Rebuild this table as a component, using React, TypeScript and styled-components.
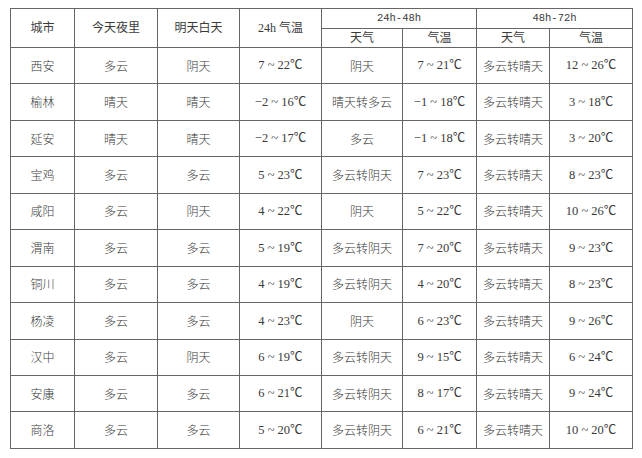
import styled, { createGlobalStyle } from "styled-components";

const GlobalStyle = createGlobalStyle`
  html, body {
    margin: 0;
    padding: 0;
    background: #fff;
  }
  body {
    font-family: "Noto Sans CJK SC", "Liberation Serif", serif;
    color: #333;
  }
`;

const Page = styled.div`
  padding: 8px 0 0 10px;
`;

const Table = styled.table`
  border-collapse: collapse;
  table-layout: fixed;
  width: 623px;
  font-size: 12px;
`;

const HeadCell = styled.th<{ $mono?: boolean }>`
  border: 1px solid #666;
  font-weight: normal;
  text-align: center;
  vertical-align: middle;
  height: 18.5px;
  padding: 0;
  line-height: 1;
  color: #3a3a3a;
  font-family: ${(p) =>
    p.$mono
      ? `"Liberation Mono", monospace`
      : `"Liberation Serif", "Noto Sans CJK SC", serif`};
  font-size: ${(p) => (p.$mono ? "10.5px" : "12px")};
`;

const Cell = styled.td<{ $num?: boolean }>`
  border: 1px solid #666;
  text-align: center;
  vertical-align: middle;
  height: 35.45px;
  padding: 0;
  line-height: 1;
  color: #3a3a3a;
  font-family: ${(p) =>
    p.$num
      ? `"Liberation Serif", "Noto Sans CJK SC", serif`
      : `"Noto Sans CJK SC", sans-serif`};
  font-size: ${(p) => (p.$num ? "12.5px" : "12px")};
  font-weight: ${(p) => (p.$num ? "normal" : 300)};
  white-space: nowrap;
`;

const widths = [64, 83, 82, 82, 81, 74, 73, 83];

type Row = [string, string, string, string, string, string, string, string];

const rows: Row[] = [
  ["西安", "多云", "阴天", "7 ~ 22℃", "阴天", "7 ~ 21℃", "多云转晴天", "12 ~ 26℃"],
  ["榆林", "晴天", "晴天", "−2 ~ 16℃", "晴天转多云", "−1 ~ 18℃", "多云转晴天", "3 ~ 18℃"],
  ["延安", "晴天", "晴天", "−2 ~ 17℃", "多云", "−1 ~ 18℃", "多云转晴天", "3 ~ 20℃"],
  ["宝鸡", "多云", "多云", "5 ~ 23℃", "多云转阴天", "7 ~ 23℃", "多云转晴天", "8 ~ 23℃"],
  ["咸阳", "多云", "阴天", "4 ~ 22℃", "阴天", "5 ~ 22℃", "多云转晴天", "10 ~ 26℃"],
  ["渭南", "多云", "多云", "5 ~ 19℃", "多云转阴天", "7 ~ 20℃", "多云转晴天", "9 ~ 23℃"],
  ["铜川", "多云", "多云", "4 ~ 19℃", "多云转阴天", "4 ~ 20℃", "多云转晴天", "8 ~ 23℃"],
  ["杨凌", "多云", "多云", "4 ~ 23℃", "阴天", "6 ~ 23℃", "多云转晴天", "9 ~ 26℃"],
  ["汉中", "多云", "阴天", "6 ~ 19℃", "多云转阴天", "9 ~ 15℃", "多云转晴天", "6 ~ 24℃"],
  ["安康", "多云", "多云", "6 ~ 21℃", "多云转阴天", "8 ~ 17℃", "多云转晴天", "9 ~ 24℃"],
  ["商洛", "多云", "多云", "5 ~ 20℃", "多云转阴天", "6 ~ 21℃", "多云转晴天", "10 ~ 20℃"],
];

const numCols = new Set([3, 5, 7]);

const App = () => {
  return (
    <Page>
      <GlobalStyle />
      <Table>
        <colgroup>
          {widths.map((w, i) => (
            <col key={i} style={{ width: w }} />
          ))}
        </colgroup>
        <thead>
          <tr>
            <HeadCell rowSpan={2}>城市</HeadCell>
            <HeadCell rowSpan={2}>今天夜里</HeadCell>
            <HeadCell rowSpan={2}>明天白天</HeadCell>
            <HeadCell rowSpan={2}>24h 气温</HeadCell>
            <HeadCell colSpan={2} $mono>
              24h-48h
            </HeadCell>
            <HeadCell colSpan={2} $mono>
              48h-72h
            </HeadCell>
          </tr>
          <tr>
            <HeadCell>天气</HeadCell>
            <HeadCell>气温</HeadCell>
            <HeadCell>天气</HeadCell>
            <HeadCell>气温</HeadCell>
          </tr>
        </thead>
        <tbody>
          {rows.map((r, ri) => (
            <tr key={ri}>
              {r.map((v, ci) => (
                <Cell key={ci} $num={numCols.has(ci)}>
                  {v}
                </Cell>
              ))}
            </tr>
          ))}
        </tbody>
      </Table>
    </Page>
  );
};

export default App;
